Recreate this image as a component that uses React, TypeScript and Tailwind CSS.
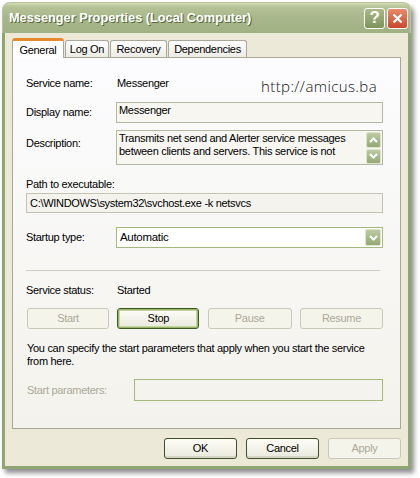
import React from 'react';

const ui = "font-['Liberation_Sans',Arial,sans-serif] text-[11px] tracking-[-0.3px] text-black";

function Chevron({ down }: { down?: boolean }) {
    return (
        <svg width="9" height="6" viewBox="0 0 9 6" className="block">
            <polyline
                points={down ? '1,1 4.5,4.5 8,1' : '1,5 4.5,1.5 8,5'}
                fill="none"
                stroke="white"
                strokeWidth="2"
            />
        </svg>
    );
}

function ScrollBtn({ down }: { down?: boolean }) {
    return (
        <div className="flex h-[16px] w-[15px] items-center justify-center rounded-[2px] border border-[#DCE4CB] bg-gradient-to-b from-[#BDCBA2] to-[#93A873]">
            <Chevron down={down} />
        </div>
    );
}

type Kind = 'normal' | 'default' | 'disabled';

function XpButton({ label, kind, w }: { label: string; kind: Kind; w: string }) {
    const base = `flex h-[21px] items-center justify-center rounded-[3px] ${w}`;
    if (kind === 'disabled') {
        return <div className={`${base} border border-[#CBC8BA] bg-[#F5F4EA] text-[#ACA899]`}>{label}</div>;
    }
    if (kind === 'default') {
        return (
            <div className={`${base} border border-[#3C5A1F] bg-gradient-to-b from-[#FEFEF8] to-[#E9E8DC] shadow-[inset_0_0_0_1px_#9DB66E,inset_0_0_0_2px_#C4D3A1]`}>
                {label}
            </div>
        );
    }
    return (
        <div className={`${base} border border-[#3F4F2A] bg-gradient-to-b from-[#FEFEF8] to-[#E9E8DC] shadow-[inset_0_-2px_0_#D9D5C6]`}>
            {label}
        </div>
    );
}

function Tab({ label, w, active }: { label: string; w: string; active?: boolean }) {
    if (active) {
        return (
            <div className={`relative z-10 mb-[-1px] flex h-[20px] items-start justify-center rounded-t-[3px] border-x border-t-[3px] border-x-[#A9A897] border-t-[#E68B2C] bg-white pt-[1px] ${w}`}>
                {label}
            </div>
        );
    }
    return (
        <div className={`flex h-[17px] items-center justify-center rounded-t-[3px] border border-b-0 border-[#A9A897] bg-gradient-to-b from-white to-[#ECEBE4] ${w}`}>
            {label}
        </div>
    );
}

export default function App() {
    return (
        <div className={`h-[478px] w-[420px] overflow-hidden bg-white ${ui}`}>
            <div className="ml-[2px] mt-[2px] flex w-[409px] flex-col rounded-t-[8px] shadow-[3px_4px_5px_rgba(0,0,0,0.45)]">
                {/* title bar */}
                <div className="flex h-[31px] items-center rounded-t-[8px] border-x border-t border-[#B8C59E] bg-[linear-gradient(to_bottom,#D0DAB5_0%,#B4C296_14%,#A8B78B_50%,#A0B183_100%)] pl-[6px] pr-[2px]">
                    <div className="flex-1 text-[12.75px] font-bold tracking-normal text-white [text-shadow:1px_1px_0_#56663A]">
                        Messenger Properties (Local Computer)
                    </div>
                    <div className="flex h-[21px] w-[21px] items-center justify-center rounded-[3px] border border-white bg-gradient-to-b from-[#A9B985] to-[#7E945C] text-[17px] font-bold text-white">
                        ?
                    </div>
                    <div className="ml-[2px] flex h-[21px] w-[21px] items-center justify-center rounded-[3px] border border-white bg-gradient-to-b from-[#E88A6B] to-[#C9462B]">
                        <svg width="11" height="11" viewBox="0 0 11 11">
                            <path d="M1.5 1.5 L9.5 9.5 M9.5 1.5 L1.5 9.5" stroke="white" strokeWidth="2.2" />
                        </svg>
                    </div>
                </div>

                {/* client */}
                <div className="flex flex-col border-x-[3px] border-b-[3px] border-[#8FA672] bg-[#ECE9D8] px-[7px] pb-[7px] pt-[5px]">
                    <div className="flex items-end gap-[1px]">
                        <Tab label="General" w="w-[52px]" active />
                        <Tab label="Log On" w="w-[44px]" />
                        <Tab label="Recovery" w="w-[57px]" />
                        <Tab label="Dependencies" w="w-[79px]" />
                    </div>

                    <div className="flex h-[372px] flex-col border border-[#A9A897] bg-gradient-to-b from-[#FCFCFE] to-[#F3F2EC] pl-[13px] pr-[17px]">
                        <div className="mt-[15px] flex h-[20px] items-center">
                            <div className="w-[91px]">Service name:</div>
                            <div className="flex-1">Messenger</div>
                            <div className="mr-[6px] mt-[6px] font-['Open_Sans',sans-serif] text-[15px] font-light tracking-[0.4px] text-[#111]">
                                http://amicus.ba
                            </div>
                        </div>

                        <div className="mt-[9px] flex h-[21px] items-center">
                            <div className="w-[90px]">Display name:</div>
                            <div className="h-full flex-1 border border-[#B3B8A4] bg-[#F7F6F1] px-[2px] leading-[14px]">
                                Messenger
                            </div>
                        </div>

                        <div className="mt-[7px] flex h-[35px]">
                            <div className="w-[90px] pt-[5px]">Description:</div>
                            <div className="flex h-full flex-1 border border-[#B3B8A4] bg-[#F7F6F1] pl-[2px] pr-[1px]">
                                <div className="flex-1 pt-[1px] leading-[13px]">
                                    Transmits net send and Alerter service messages
                                    <br />
                                    between clients and servers. This service is not
                                </div>
                                <div className="flex flex-col gap-[1px] pt-[1px]">
                                    <ScrollBtn />
                                    <ScrollBtn down />
                                </div>
                            </div>
                        </div>

                        <div className="mt-[12px] h-[14px] leading-[14px]">Path to executable:</div>
                        <div className="mt-[2px] flex h-[20px] items-center border border-[#C4C3B2] bg-[#F4F3EE] px-[3px]">
                            C:\WINDOWS\system32\svchost.exe -k netsvcs
                        </div>

                        <div className="mt-[14px] flex h-[21px] items-center">
                            <div className="w-[90px]">Startup type:</div>
                            <div className="flex h-full flex-1 items-center border border-[#A4B97F] bg-white pl-[3px] pr-[1px]">
                                <div className="flex-1 text-[11.5px]">Automatic</div>
                                <div className="flex h-[17px] w-[16px] items-center justify-center rounded-[2px] border border-[#DCE4CB] bg-gradient-to-b from-[#BDCBA2] to-[#93A873]">
                                    <Chevron down />
                                </div>
                            </div>
                        </div>

                        <div className="mr-[3px] mt-[22px] h-px bg-[#D0CFBF]" />

                        <div className="mt-[12px] flex h-[14px] items-center">
                            <div className="w-[91px]">Service status:</div>
                            <div>Started</div>
                        </div>

                        <div className="mt-[11px] flex justify-between">
                            <XpButton label="Start" kind="disabled" w="w-[82px] ml-[1px]" />
                            <XpButton label="Stop" kind="default" w="w-[82px]" />
                            <XpButton label="Pause" kind="disabled" w="w-[84px]" />
                            <XpButton label="Resume" kind="disabled" w="w-[83px]" />
                        </div>

                        <div className="mt-[13px] whitespace-nowrap pl-[1px] leading-[13px]">
                            You can specify the start parameters that apply when you start the service
                            <br />
                            from here.
                        </div>

                        <div className="mt-[11px] flex h-[22px] items-center">
                            <div className="w-[108px] pl-[1px] text-[#ACA899]">Start parameters:</div>
                            <div className="h-full flex-1 border border-[#A4B97F] bg-[#F4F3EE]" />
                        </div>
                    </div>

                    <div className="mt-[9px] flex justify-end gap-[9px]">
                        <XpButton label="OK" kind="normal" w="w-[73px]" />
                        <XpButton label="Cancel" kind="normal" w="w-[73px]" />
                        <XpButton label="Apply" kind="disabled" w="w-[73px]" />
                    </div>
                </div>
            </div>
        </div>
    );
}
